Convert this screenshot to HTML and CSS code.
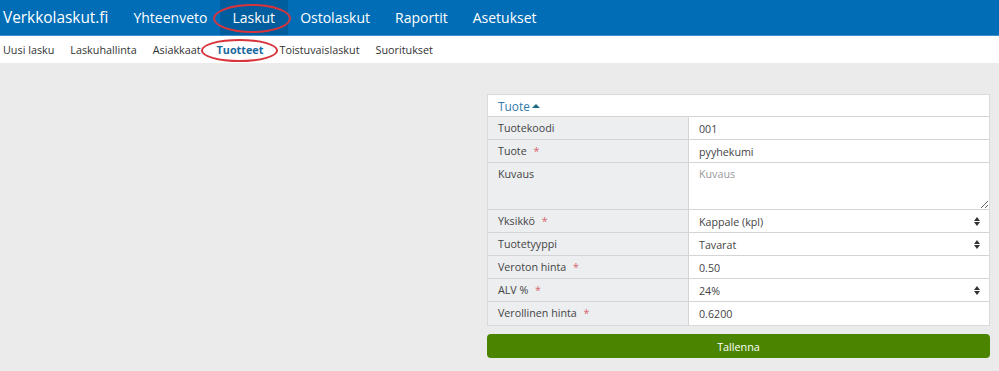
FILE: index.html
```html
<!DOCTYPE html>
<html lang="fi">
<head>
    <meta charset="UTF-8">
    <title>Tuotteet - Verkkolaskut.fi</title>
    <link rel="stylesheet" href="styles.css">
</head>
<body>
    <header class="topbar">
        <a class="brand" href="#">Verkkolaskut.fi</a>
        <nav class="mainnav">
            <a href="#">Yhteenveto</a>
            <a href="#" class="active">Laskut<span class="ring ring-main"></span></a>
            <a href="#">Ostolaskut</a>
            <a href="#">Raportit</a>
            <a href="#">Asetukset</a>
        </nav>
    </header>

    <nav class="subnav">
        <a href="#">Uusi lasku</a>
        <a href="#">Laskuhallinta</a>
        <a href="#">Asiakkaat</a>
        <a href="#" class="current">Tuotteet<span class="ring ring-sub"></span></a>
        <a href="#">Toistuvaislaskut</a>
        <a href="#">Suoritukset</a>
    </nav>

    <main class="page">
        <form class="product">
            <div class="panel">
                <div class="panel-title">Tuote <span class="caret"></span></div>
                <div class="row">
                    <label>Tuotekoodi</label>
                    <div class="field"><input type="text" value="001"></div>
                </div>
                <div class="row">
                    <label>Tuote <span class="req">*</span></label>
                    <div class="field"><input type="text" value="pyyhekumi"></div>
                </div>
                <div class="row row-tall">
                    <label>Kuvaus</label>
                    <div class="field"><textarea placeholder="Kuvaus"></textarea></div>
                </div>
                <div class="row">
                    <label>Yksikkö <span class="req">*</span></label>
                    <div class="field select">Kappale (kpl)<span class="updown"></span></div>
                </div>
                <div class="row">
                    <label>Tuotetyyppi</label>
                    <div class="field select">Tavarat<span class="updown"></span></div>
                </div>
                <div class="row">
                    <label>Veroton hinta <span class="req">*</span></label>
                    <div class="field"><input type="text" value="0.50"></div>
                </div>
                <div class="row">
                    <label>ALV % <span class="req">*</span></label>
                    <div class="field select">24%<span class="updown"></span></div>
                </div>
                <div class="row">
                    <label>Verollinen hinta <span class="req">*</span></label>
                    <div class="field"><input type="text" value="0.6200"></div>
                </div>
            </div>
            <button type="button" class="save">Tallenna</button>
        </form>
    </main>
</body>
</html>
```

FILE: styles.css
```css
* {
    margin: 0;
    padding: 0;
    box-sizing: border-box;
}

body {
    font-family: 'Open Sans', 'Liberation Sans', sans-serif;
    background-color: #ebebeb;
    color: #444;
    height: 371px;
    overflow: hidden;
}

a {
    text-decoration: none;
    color: inherit;
}

.topbar {
    display: flex;
    align-items: stretch;
    height: 36px;
    background-color: #006db6;
    border-bottom: 1px solid #3f8fce;
    color: #fff;
}

.brand {
    display: flex;
    align-items: center;
    padding: 0 12.5px 1px 3px;
    font-size: 15.4px;
}

.mainnav {
    display: flex;
}

.mainnav a {
    position: relative;
    display: flex;
    align-items: center;
    padding: 0 12.5px 1px;
    font-size: 14px;
}

.mainnav a.active {
    background-color: #005d9e;
}

.subnav {
    display: flex;
    align-items: center;
    gap: 16px;
    height: 27px;
    padding: 0 3px;
    background-color: #fff;
    font-size: 10.8px;
    line-height: 15px;
    color: #333;
}

.subnav a {
    position: relative;
}

.subnav a.current {
    font-weight: bold;
    color: #1a6a9f;
}

.ring {
    position: absolute;
    border: 2px solid #d8343c;
    border-radius: 50%;
    pointer-events: none;
}

.ring-main {
    left: -7px;
    right: -3px;
    top: 4px;
    bottom: 2px;
}

.ring-sub {
    left: -16px;
    right: -15px;
    top: -3px;
    bottom: -5px;
}

.page {
    display: flex;
    justify-content: flex-end;
    padding: 31px 9px 0 0;
}

.product {
    width: 503px;
}

.panel {
    background-color: #fff;
    border: 1px solid #dadada;
}

.panel-title {
    height: 22px;
    padding: 3px 10px 0;
    font-size: 11.9px;
    color: #2f7ab0;
    border-bottom: 1px solid #d4d4d4;
}

.caret {
    display: inline-block;
    width: 0;
    height: 0;
    border-left: 4px solid transparent;
    border-right: 4px solid transparent;
    border-bottom: 4px solid #1d6a80;
    vertical-align: 3px;
    margin-left: -1px;
}

.row {
    display: grid;
    grid-template-columns: 201px 1fr;
    height: 23px;
    border-bottom: 1px solid #d4d4d4;
    font-size: 10.7px;
}

.row:last-child {
    border-bottom: none;
}

.row-tall {
    height: 47px;
}

.row label {
    padding: 4px 10px 0;
    background-color: #eceef0;
    border-right: 1px solid #d4d4d4;
    color: #444;
}

.req {
    color: #d9646e;
    margin-left: 4px;
}

.field {
    position: relative;
    display: flex;
}

.field input,
.field textarea {
    width: 100%;
    border: none;
    outline: none;
    font: inherit;
    color: #444;
    padding: 1px 10px 0;
    background: #fff;
}

.field textarea {
    padding-top: 4px;
    resize: vertical;
}

.field textarea::placeholder {
    color: #999;
}

.select {
    align-items: center;
    padding: 1px 10px 0;
    color: #444;
}

.updown {
    position: absolute;
    right: 9px;
    top: 7px;
    width: 6px;
    height: 9px;
}

.updown::before,
.updown::after {
    content: "";
    position: absolute;
    left: 0;
    border-left: 3px solid transparent;
    border-right: 3px solid transparent;
}

.updown::before {
    top: 0;
    border-bottom: 4px solid #333;
}

.updown::after {
    bottom: 0;
    border-top: 4px solid #333;
}

.save {
    display: block;
    width: 100%;
    height: 24px;
    margin-top: 8px;
    border: none;
    border-radius: 4px;
    background-color: #4b8500;
    color: #fff;
    font-family: inherit;
    font-size: 10.8px;
    cursor: pointer;
}
```
